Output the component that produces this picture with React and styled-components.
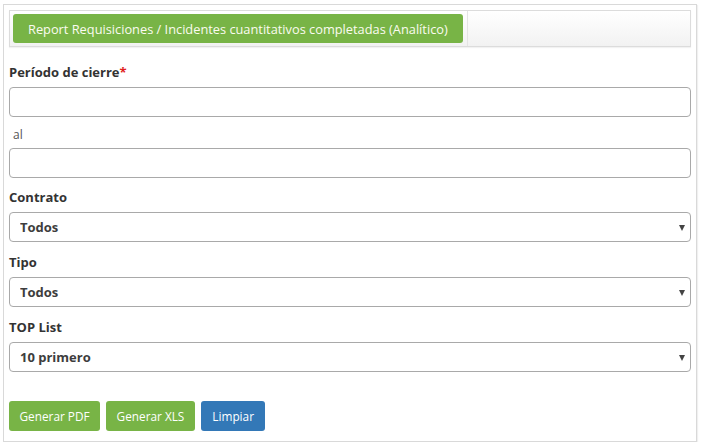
import React from "react";
import styled, { createGlobalStyle } from "styled-components";

const Global = createGlobalStyle`
  html, body { margin: 0; padding: 0; background: #fff; }
  body { font-family: "Open Sans", "Liberation Sans", sans-serif; color: #333; }
  * { box-sizing: border-box; }
`;

const Panel = styled.div`
  margin: 4px 0 0 3px;
  width: 694px;
  height: 438px;
  border: 1px solid #d9d9d9;
  box-shadow: 1px 1px 1px rgba(0, 0, 0, 0.06);
  padding: 5px 5px 10px 5px;
  display: flex;
  flex-direction: column;
`;

const TabBar = styled.div`
  display: flex;
  align-items: stretch;
  height: 37px;
  border: 1px solid #dcdcdc;
  background: linear-gradient(#ffffff, #f2f2f2);
  box-shadow: 0 1px 1px rgba(0, 0, 0, 0.05);
  padding: 3px;
`;

const Tab = styled.div`
  display: flex;
  align-items: center;
  background: #78b446;
  color: #fbfbf0;
  font-size: 12.8px;
  padding: 0 15px 0 15px;
  border-radius: 3px;
  white-space: nowrap;
`;

const TabDivider = styled.div`
  width: 1px;
  margin: -3px 0 -3px 4px;
  background: #e4e4e4;
`;

const Form = styled.div`
  display: flex;
  flex-direction: column;
  padding-top: 15px;
`;

const Group = styled.div`
  display: flex;
  flex-direction: column;
  margin-bottom: ${(p) => p.$mb ?? 10}px;
`;

const Label = styled.label`
  font-size: 13px;
  font-weight: 700;
  line-height: 20px;
  color: #333;
  margin-bottom: 5px;
`;

const SubLabel = styled.label`
  font-size: 12px;
  font-weight: 400;
  line-height: 16px;
  color: #555;
  padding-left: 4px;
  margin-bottom: 5px;
`;

const Required = styled.span`
  color: #e0201b;
`;

const TextInput = styled.input`
  height: 30px;
  width: 100%;
  border: 1px solid #a9a9a9;
  border-radius: 4px;
  padding: 0 10px;
  font-family: inherit;
  font-size: 13px;
  outline: none;
`;

const SelectWrap = styled.div`
  position: relative;
`;

const Select = styled.select`
  appearance: none;
  -webkit-appearance: none;
  height: 30px;
  width: 100%;
  border: 1px solid #a9a9a9;
  border-radius: 4px;
  padding: 0 10px;
  font-family: inherit;
  font-size: 13px;
  font-weight: 700;
  color: #3d3d3d;
  background: #fff;
  outline: none;
`;

const Arrow = styled.span`
  position: absolute;
  right: 6px;
  top: 13px;
  width: 0;
  height: 0;
  border-left: 3px solid transparent;
  border-right: 3px solid transparent;
  border-top: 6px solid #444;
  pointer-events: none;
`;

const Actions = styled.div`
  display: flex;
  gap: 6px;
  margin-top: auto;
`;

const Button = styled.button`
  height: 30px;
  border: 0;
  border-radius: 3px;
  padding: 0 ${(p) => p.$px ?? 10}px;
  font-family: inherit;
  font-size: 11.8px;
  color: #fff;
  background: ${(p) => (p.$variant === "blue" ? "#3378b7" : "#78b446")};
  cursor: pointer;
`;

function SelectField({ label, value, options, mb }) {
  return (
    <Group $mb={mb}>
      <Label>{label}</Label>
      <SelectWrap>
        <Select defaultValue={value}>
          {options.map((o) => (
            <option key={o}>{o}</option>
          ))}
        </Select>
        <Arrow />
      </SelectWrap>
    </Group>
  );
}

export default function App() {
  return (
    <>
      <Global />
      <Panel>
        <TabBar>
          <Tab>Report Requisiciones / Incidentes cuantitativos completadas (Analítico)</Tab>
          <TabDivider />
        </TabBar>
        <Form>
          <Group>
            <Label>
              Período de cierre<Required>*</Required>
            </Label>
            <TextInput type="text" />
          </Group>
          <Group $mb={9}>
            <SubLabel>al</SubLabel>
            <TextInput type="text" />
          </Group>
          <SelectField label="Contrato" value="Todos" options={["Todos"]} />
          <SelectField label="Tipo" value="Todos" options={["Todos"]} />
          <SelectField label="TOP List" value="10 primero" options={["10 primero"]} />
        </Form>
        <Actions>
          <Button $px={10.5}>Generar PDF</Button>
          <Button $px={10.5}>Generar XLS</Button>
          <Button $variant="blue" $px={11.5}>Limpiar</Button>
        </Actions>
      </Panel>
    </>
  );
}
